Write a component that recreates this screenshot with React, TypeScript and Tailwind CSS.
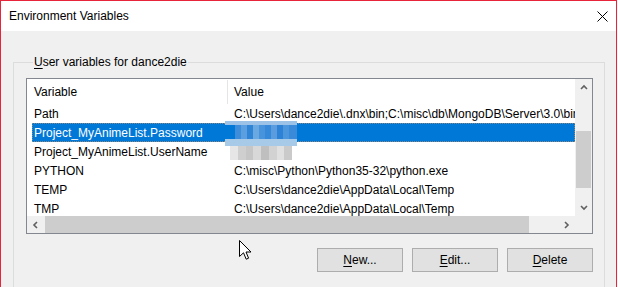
import React from 'react';

const FONT = "font-['Liberation_Sans',Arial,sans-serif]";

const rows = [
    { name: 'Path', value: 'C:\\Users\\dance2die\\.dnx\\bin;C:\\misc\\db\\MongoDB\\Server\\3.0\\bin' },
    { name: 'Project_MyAnimeList.Password', value: '', selected: true },
    { name: 'Project_MyAnimeList.UserName', value: '' },
    { name: 'PYTHON', value: 'C:\\misc\\Python\\Python35-32\\python.exe' },
    { name: 'TEMP', value: 'C:\\Users\\dance2die\\AppData\\Local\\Temp' },
    { name: 'TMP', value: 'C:\\Users\\dance2die\\AppData\\Local\\Temp' },
];

// pixelated blur over the secret values
const blueBlocks = ['bg-[#3d8ddb]', 'bg-[#5b9fe0]', 'bg-[#2f84d6]', 'bg-[#6aa8e2]', 'bg-[#4794dd]', 'bg-[#3688d9]', 'bg-[#5a9cde]', 'bg-[#2d82d5]', 'bg-[#4b96dc]'];
const grayBlocks = ['bg-[#e6e6e6]', 'bg-[#cfcfcf]', 'bg-[#c6c6c6]', 'bg-[#d8d8d8]', 'bg-[#bfbfbf]', 'bg-[#d2d2d2]', 'bg-[#e0e0e0]', 'bg-[#cacaca]'];

const Chevron: React.FC<{ dir: 'up' | 'down' | 'left' | 'right' }> = ({ dir }) => {
    const pts = {
        up: '1,5 4,2 7,5',
        down: '1,2 4,5 7,2',
        left: '5,1 2,4 5,7',
        right: '2,1 5,4 2,7',
    }[dir];
    return (
        <svg width="8" height="8" viewBox="0 0 8 8">
            <polyline points={pts} fill="none" stroke="#606060" strokeWidth="1.6" />
        </svg>
    );
};

const Button: React.FC<{ hot: string; rest: string }> = ({ hot, rest }) => (
    <button className="w-[86px] h-[24px] bg-[#e1e1e1] border border-[#adadad] text-[12px] text-black flex items-center justify-center">
        <span className="underline underline-offset-[2px]">{hot}</span>
        <span>{rest}</span>
    </button>
);

const App: React.FC = () => {
    return (
        <div className={`${FONT} relative w-[617px] h-[287px] border-l border-t border-r border-[#e8243b] bg-white overflow-hidden flex flex-col text-black`}>
            <div className="h-[30px] shrink-0 flex items-center justify-between pl-[8px] pr-[8px] bg-white">
                <span className="text-[12px]">Environment Variables</span>
                <svg width="11" height="11" viewBox="0 0 11 11">
                    <path d="M0.5 0.5 L10.5 10.5 M10.5 0.5 L0.5 10.5" stroke="#000" strokeWidth="1" />
                </svg>
            </div>

            <div className="flex-1 bg-[#f0f0f0] pl-[12px] pr-[11px] pt-[24px]">
                <fieldset className="border border-[#dcdcdc] pl-[12px] pr-[11px] pb-[14px] h-[240px]">
                    <legend className="ml-[7px] px-[1px] text-[12px] leading-[14px]">
                        <span className="underline underline-offset-[2px]">U</span>ser variables for dance2die
                    </legend>

                    <div className="mt-[9px] w-[567px] h-[156px] border border-[#828790] bg-white flex flex-col">
                        <div className="flex h-[137px]">
                            <div className="relative w-[548px] overflow-hidden text-[12px]">
                                <div className="flex h-[25px] items-center pt-[1px]">
                                    <div className="w-[200px] pl-[7px]">Variable</div>
                                    <div className="w-px h-[24px] self-start bg-[#e5e5e5]" />
                                    <div className="pl-[6px]">Value</div>
                                </div>
                                {rows.map(r => (
                                    <div
                                        key={r.name}
                                        className={`ml-[5px] h-[19px] flex items-center whitespace-nowrap ${
                                            r.selected ? 'bg-[#0078d7] text-white outline outline-1 outline-dotted outline-[#c8905a]/70 -outline-offset-1' : ''
                                        }`}
                                    >
                                        <div className="w-[195px] shrink-0 pl-[2px]">{r.name}</div>
                                        <div className="pl-[7px]">{r.value}</div>
                                    </div>
                                ))}

                                {/* mosaic over password */}
                                <div className="absolute left-[198px] top-[42px] w-[72px] flex flex-col">
                                    <div className="h-[4px] bg-[#9cc2e7]" />
                                    <div className="h-[14px] flex bg-[#3a8ad9]">
                                        <div className="w-[10px] bg-[#0078d7]" />
                                        {blueBlocks.map((c, i) => (
                                            <div key={i} className={`w-[6px] h-full ${c}`} />
                                        ))}
                                    </div>
                                    <div className="h-[7px] bg-[#a8cae9]" />
                                </div>
                                {/* mosaic over username */}
                                <div className="absolute left-[203px] top-[67px] w-[62px] h-[14px] flex bg-[#dedede]">
                                    {grayBlocks.map((c, i) => (
                                        <div key={i} className={`w-[8px] h-full ${c}`} />
                                    ))}
                                </div>
                            </div>
                            <div className="w-[17px] bg-[#f0f0f0] flex flex-col items-center">
                                <div className="h-[17px] flex items-center justify-center"><Chevron dir="up" /></div>
                                <div className="flex-1 w-full px-px pt-[35px] pb-[11px]">
                                    <div className="h-[57px] bg-[#cdcdcd]" />
                                </div>
                                <div className="h-[17px] flex items-center justify-center"><Chevron dir="down" /></div>
                            </div>
                        </div>
                        <div className="flex h-[17px] bg-[#f0f0f0]">
                            <div className="w-[17px] flex items-center justify-center"><Chevron dir="left" /></div>
                            <div className="w-[514px] py-0 pl-px pr-[29px] flex">
                                <div className="flex-1 bg-[#cdcdcd]" />
                            </div>
                            <div className="w-[17px] flex items-center justify-center"><Chevron dir="right" /></div>
                            <div className="w-[17px]" />
                        </div>
                    </div>

                    <div className="mt-[14px] flex justify-end gap-[9px]">
                        <Button hot="N" rest="ew..." />
                        <Button hot="E" rest="dit..." />
                        <Button hot="D" rest="elete" />
                    </div>
                </fieldset>
            </div>

            {/* mouse pointer */}
            <svg className="absolute left-[238px] top-[239px]" width="13" height="21" viewBox="0 0 13 21">
                <path d="M0.5 0.5 L0.5 16.5 L4.5 12.8 L7.2 19.2 L9.6 18.2 L7 12 L12 12 Z" fill="#fff" stroke="#000" strokeWidth="1" />
            </svg>
        </div>
    );
};

export default App;
